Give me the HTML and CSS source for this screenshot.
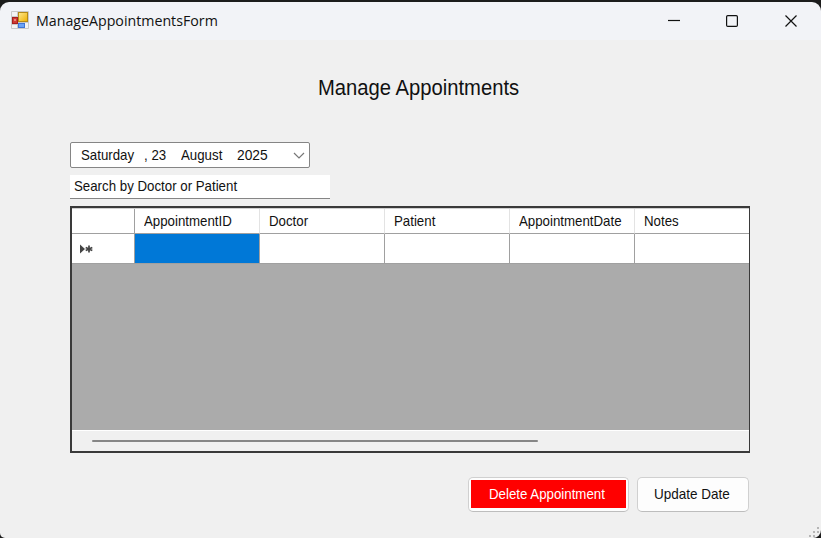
FILE: index.html
```html
<!DOCTYPE html>
<html lang="en">
<head>
<meta charset="utf-8">
<title>ManageAppointmentsForm</title>
<link rel="stylesheet" href="styles.css">
</head>
<body>
<div class="window">
  <header class="titlebar">
    <svg class="app-icon" width="18" height="18" viewBox="0 0 18 18">
      <defs><linearGradient id="gold" x2="1" y2="1"><stop stop-color="#ffe991"/><stop offset="1" stop-color="#eeb000"/></linearGradient></defs>
      <rect width="18" height="18" rx="1" fill="#c9c9c9"/>
      <path d="M1 1h5v4H1zM1 14h5v3H1zM14 12h3v5h-3z" fill="#f3f3f3"/>
      <rect x="7.500" y="1.500" width="9" height="9" fill="url(#gold)" stroke="#b58a16"/>
      <rect x="1.500" y="6.500" width="5" height="6" fill="#cf3a32" stroke="#a71e1e"/>
      <rect x="3" y="8" width="2" height="2" fill="#e98478"/>
      <rect x="7.500" y="12.500" width="6" height="4" fill="#6ba3f7" stroke="#3e75d6"/>
    </svg>
    <span class="caption">ManageAppointmentsForm</span>
    <svg class="controls" width="131" height="14" viewBox="0 0 131 14" fill="none" stroke="#111" stroke-width="1.200">
      <path d="M0 6.500h12"/>
      <rect x="58.600" y="1.600" width="10.800" height="10.800" rx="1.200"/>
      <path d="M117.500 1.500l11 11M128.500 1.500l-11 11"/>
    </svg>
  </header>
  <main class="form">
    <h1><span class="t">Manage Appointments</span></h1>
    <div class="date">
      <span class="t">Saturday</span><span class="t">, 23</span><span class="t">August</span><span class="t year">2025</span>
      <svg class="chevron" width="12" height="8" viewBox="0 0 12 8" fill="none" stroke="#777" stroke-width="1.200"><path d="M1 1l5 5 5-5"/></svg>
    </div>
    <div class="search"><span class="t">Search by Doctor or Patient</span></div>
    <section class="grid">
      <div class="row head">
        <div></div><div><span class="t">AppointmentID</span></div><div><span class="t">Doctor</span></div><div><span class="t">Patient</span></div><div><span class="t">AppointmentDate</span></div><div><span class="t">Notes</span></div>
      </div>
      <div class="row">
        <div class="marker"><svg width="14" height="10" viewBox="0 0 14 10"><path d="M1 .5L6 5 1 9.500z" fill="#444"/><path d="M10 1.500v7M6.700 3.500l6.600 3M13.300 3.500l-6.600 3" stroke="#444" stroke-width="1.700"/></svg></div>
        <div class="selected"></div><div></div><div></div><div></div><div></div>
      </div>
      <div class="empty"></div>
      <div class="scroll"><div class="thumb"></div></div>
    </section>
    <div class="actions">
      <div class="button delete"><div class="fill"><span class="t">Delete Appointment</span></div></div>
      <div class="button update"><span class="t">Update Date</span></div>
    </div>
  </main>
  <svg class="grip" width="11" height="11" viewBox="0 0 11 11" fill="#b5b5b5"><path d="M8 0h2v2H8zM4 4h2v2H4zM8 4h2v2H8zM0 8h2v2H0zM4 8h2v2H4z"/></svg>
</div>
</body>
</html>
```

FILE: styles.css
```css
* { box-sizing: border-box; }
body { margin: 0; background: #1c1c1c; overflow: hidden; }
.window {
  position: relative;
  width: 821px;
  height: 538px;
  padding-top: 2px;
  background: #1c1c1c;
  font: 15px/20px "Liberation Sans", sans-serif;
  color: #111;
}
.titlebar {
  height: 38px;
  display: flex;
  align-items: center;
  padding: 0 22px 0 11px;
  background: #f2f3f7;
  border-radius: 9px 9px 0 0;
}
.app-icon { margin-top: -2px; }
.caption {
  margin-left: 7px;
  font: 14.5px/20px "Open Sans", sans-serif;
  white-space: nowrap;
  transform: scaleX(.98);
  transform-origin: left;
}
.controls { margin-left: auto; }
.form {
  height: 498px;
  padding: 35px 71px 0 70px;
  background: #f0f0f0;
  border-radius: 0 0 8px 5px;
}
.t {
  display: inline-block;
  white-space: nowrap;
  transform: scaleX(.885);
  transform-origin: left;
}
h1 {
  margin: 0 0 41px 247.5px;
  font-size: 21.5px;
  font-weight: 400;
  line-height: 26px;
}
h1 .t { transform: scaleX(.94); }
.date {
  width: 240px;
  height: 26px;
  display: grid;
  grid-template-columns: 63px 37px 56px 56px 12px;
  align-items: center;
  padding-left: 10px;
  background: #fff;
  border: 1px solid #858585;
  border-radius: 2px;
}
.date .year { transform: scaleX(.92); }
.chevron { margin-top: 2px; }
.search {
  width: 260px;
  height: 24px;
  margin: 7px 0 7px 0;
  padding: 1px 4px;
  background: #fff;
  border-bottom: 1px solid #858585;
}
.grid {
  width: 680px;
  height: 247px;
  display: flex;
  flex-direction: column;
  border: 2px solid #3a3a3a;
  border-width: 2px 1px 2px 2px;
  overflow: hidden;
}
.row {
  height: 30px;
  flex: none;
  display: grid;
  grid-template-columns: 63px 125px 125px 125px 125px 1fr;
  background: #fff;
}
.row > div { border-right: 1px solid #a0a0a0; border-bottom: 1px solid #a0a0a0; }
.row > div:last-child { border-right: 0; }
.head { height: 26px; border-top: 1px solid #d0d0d0; }
.head > div { padding: 2px 0 0 9px; border-right-color: #e3e3e3; }
.head > div:first-child { border-right-color: #a0a0a0; }
.row > .marker { padding: 5px 0 0 7px; }
.row > .selected { background: #0078d7; }
.empty { flex: 1; background: #ababab; }
.scroll { height: 21px; padding: 9px 0 0 20px; background: #f0f0f0; border-top: 1px solid #fff; }
.thumb { width: 446px; height: 2px; background: #868686; border-radius: 1px; }
.actions {
  display: flex;
  justify-content: flex-end;
  gap: 8px;
  margin: 24px 1px 0 0;
}
.button {
  height: 35px;
  padding-top: 6px;
  background: #fdfdfd;
  border: 1px solid #d0d0d0;
  border-bottom-color: #bdbdbd;
  border-radius: 5px;
}
.delete { width: 161px; padding: 2px; }
.fill {
  height: 28px;
  padding: 4px 0 0 18px;
  color: #fff;
  background: #f00;
}
.update { width: 112px; padding-left: 16px; }
.update .t { transform: scaleX(.9); }
.grip { position: absolute; right: 1px; bottom: 0; }
```
